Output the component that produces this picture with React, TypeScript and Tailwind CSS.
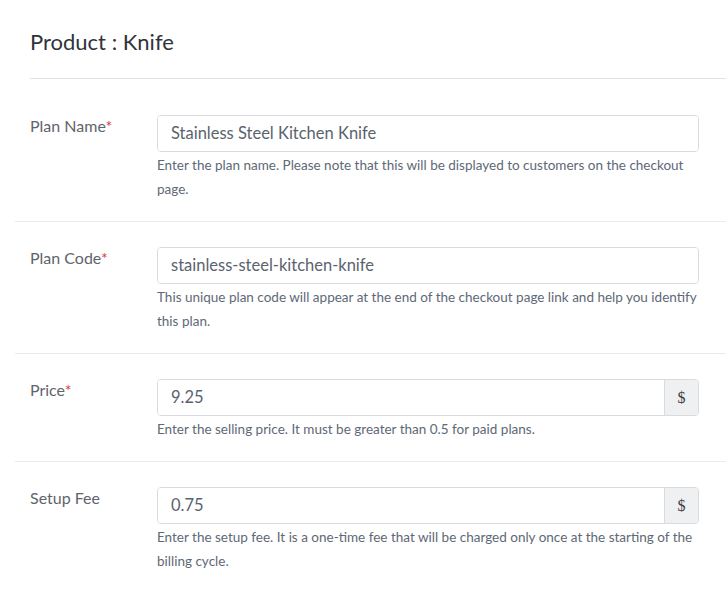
import React from 'react'

type Field = {
  label: string
  required: boolean
  value: string
  help: string
  addon?: string
}

const fields: Field[] = [
  {
    label: 'Plan Name',
    required: true,
    value: 'Stainless Steel Kitchen Knife',
    help: 'Enter the plan name. Please note that this will be displayed to customers on the checkout page.',
  },
  {
    label: 'Plan Code',
    required: true,
    value: 'stainless-steel-kitchen-knife',
    help: 'This unique plan code will appear at the end of the checkout page link and help you identify this plan.',
  },
  {
    label: 'Price',
    required: true,
    value: '9.25',
    help: 'Enter the selling price. It must be greater than 0.5 for paid plans.',
    addon: '$',
  },
  {
    label: 'Setup Fee',
    required: false,
    value: '0.75',
    help: 'Enter the setup fee. It is a one-time fee that will be charged only once at the starting of the billing cycle.',
    addon: '$',
  },
]

function FormRow({ field, first, last }: { field: Field; first: boolean; last: boolean }) {
  return (
    <div
      className={`flex pl-[15px] pr-[27px] pb-5 ${first ? 'pt-[36px]' : 'pt-[25px]'} ${
        last ? '' : 'border-b border-[#ebebeb]'
      }`}
    >
      {/* Label */}
      <div className="w-[127px] shrink-0 text-[16px] leading-[22px] text-[#5f646b]">
        {field.label}
        {field.required && <span className="text-[#e0343f]">*</span>}
      </div>

      {/* Input + help */}
      <div className="flex-1 min-w-0">
        <div className="flex h-[37px] rounded-[4px] border border-[#d9dbde] overflow-hidden">
          <input
            readOnly
            value={field.value}
            className="flex-1 min-w-0 px-[13px] text-[16.5px] text-[#5a636d] bg-white outline-none"
            style={{ fontFamily: 'Lato, sans-serif' }}
          />
          {field.addon && (
            <div className="w-[34px] flex items-center justify-center bg-[#eef0f2] border-l border-[#d9dbde] text-[16px] text-[#3a3f45] font-['Liberation_Serif',serif]">
              {field.addon}
            </div>
          )}
        </div>
        <p className="mt-px text-[13.5px] leading-6 text-[#5e6876]">{field.help}</p>
      </div>
    </div>
  )
}

export default function App() {
  return (
    <div className="w-[726px] h-[592px] bg-white overflow-hidden font-['Lato',sans-serif]">
      {/* Header */}
      <div className="ml-[30px] pt-[28px] pb-[22px] border-b border-[#e3e3e3]">
        <h1 className="text-[22px] leading-7 text-[#2f343a]">Product : Knife</h1>
      </div>

      {/* Rows */}
      <div className="ml-[15px]">
        {fields.map((f, i) => (
          <FormRow key={f.label} field={f} first={i === 0} last={i === fields.length - 1} />
        ))}
      </div>
    </div>
  )
}
